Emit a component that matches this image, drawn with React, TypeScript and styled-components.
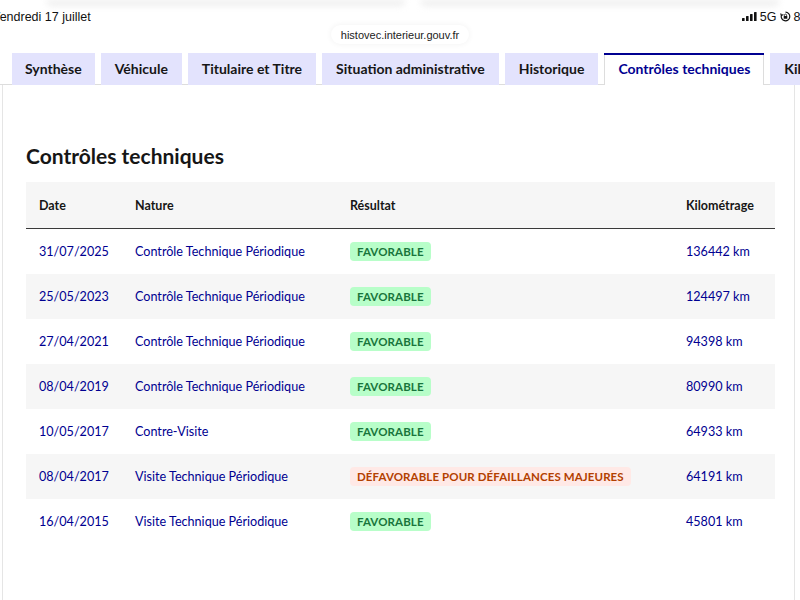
import React from 'react';
import styled, { createGlobalStyle } from 'styled-components';

const GlobalStyle = createGlobalStyle`
  html, body {
    margin: 0;
    padding: 0;
    background: #ffffff;
    overflow: hidden;
  }

  body {
    width: 800px;
    height: 600px;
    font-family: Lato, 'Noto Sans', 'Liberation Sans', sans-serif;
    color: #161616;
  }
`;

const Page = styled.div`
  width: 800px;
  height: 600px;
  overflow: hidden;
  display: flex;
  flex-direction: column;
`;

const Haze = styled.div`
  display: flex;
  gap: 14px;
  height: 8px;
  padding: 0 20px 0 46px;

  span {
    flex: 1;
    height: 6px;
    background: #eeeeee;
    border-radius: 0 0 8px 8px;
    filter: blur(3px);
  }
`;

const StatusBar = styled.div`
  display: flex;
  justify-content: space-between;
  align-items: center;
  height: 17px;
  font-family: 'Liberation Sans', Arial, sans-serif;
  font-size: 12.5px;
  color: #111111;
  white-space: nowrap;
`;

const Clock = styled.span`
  margin-left: -8px;
`;

const Indicators = styled.div`
  display: flex;
  align-items: center;
  gap: 3px;
  margin-right: -22px;
`;

const AddressRow = styled.div`
  display: flex;
  justify-content: center;
  height: 28px;
`;

const AddressPill = styled.div`
  height: 19px;
  padding: 0 10px;
  display: flex;
  align-items: center;
  background: #ffffff;
  border-radius: 10px;
  box-shadow: 0 0 6px rgba(0, 0, 0, 0.06);
  font-family: 'Liberation Sans', Arial, sans-serif;
  font-size: 11px;
  color: #222222;
`;

const TabList = styled.div`
  display: flex;
  gap: 6px;
  padding-left: 12px;
  overflow: hidden;
  box-shadow: inset 0 -1px 0 #dddddd;
`;

const Tab = styled.div<{ $active?: boolean }>`
  flex-shrink: 0;
  height: 32px;
  padding: 0 14px 3px;
  box-sizing: border-box;
  display: flex;
  align-items: center;
  font-size: 14px;
  font-weight: 700;
  white-space: nowrap;
  background: ${({ $active }) => ($active ? '#ffffff' : '#e3e3fd')};
  color: ${({ $active }) => ($active ? '#000091' : '#161616')};
  border-top: 2px solid ${({ $active }) => ($active ? '#000091' : 'transparent')};
  box-shadow: ${({ $active }) =>
    $active ? 'inset 1px 0 0 #dddddd, inset -1px 0 0 #dddddd' : 'none'};

  &:first-child {
    padding-left: 13px;
    padding-right: 13px;
  }
`;

const Panel = styled.div`
  flex: 1;
  margin-left: 2px;
  width: 793px;
  box-sizing: border-box;
  border-left: 1px solid #e5e5e5;
  border-right: 1px solid #e5e5e5;
  padding: 57px 20px 0 23px;
`;

const Title = styled.h2`
  margin: 0 0 12px 0;
  font-size: 21px;
  line-height: 28px;
  font-weight: 700;
  color: #161616;
`;

const Table = styled.div`
  display: grid;
  grid-template-columns: 96px 215px 1fr 102px;
  width: 749px;
`;

const HeadCell = styled.div`
  height: 46px;
  display: flex;
  align-items: center;
  padding-left: 13px;
  background: #f6f6f6;
  border-bottom: 1px solid #3a3a3a;
  font-size: 12.5px;
  font-weight: 700;
  color: #161616;
`;

const Cell = styled.div<{ $shaded: boolean }>`
  height: 45px;
  display: flex;
  align-items: center;
  padding-left: 13px;
  background: ${({ $shaded }) => ($shaded ? '#f6f6f6' : '#ffffff')};
  font-size: 12.6px;
  color: #000091;
  white-space: nowrap;
`;

const Badge = styled.span<{ $ok: boolean }>`
  display: inline-flex;
  align-items: center;
  height: 19px;
  padding: 0 7px;
  border-radius: 4px;
  font-size: 11.5px;
  font-weight: 700;
  letter-spacing: 0.1px;
  text-transform: uppercase;
  background: ${({ $ok }) => ($ok ? '#b8fec9' : '#ffe9e6')};
  color: ${({ $ok }) => ($ok ? '#18753c' : '#b34000')};
`;

const tabs = [
  'Synthèse',
  'Véhicule',
  'Titulaire et Titre',
  'Situation administrative',
  'Historique',
  'Contrôles techniques',
  'Kilométrage',
];

type Controle = {
  date: string;
  nature: string;
  resultat: string;
  ok: boolean;
  km: string;
};

const controles: Controle[] = [
  { date: '31/07/2025', nature: 'Contrôle Technique Périodique', resultat: 'Favorable', ok: true, km: '136442 km' },
  { date: '25/05/2023', nature: 'Contrôle Technique Périodique', resultat: 'Favorable', ok: true, km: '124497 km' },
  { date: '27/04/2021', nature: 'Contrôle Technique Périodique', resultat: 'Favorable', ok: true, km: '94398 km' },
  { date: '08/04/2019', nature: 'Contrôle Technique Périodique', resultat: 'Favorable', ok: true, km: '80990 km' },
  { date: '10/05/2017', nature: 'Contre-Visite', resultat: 'Favorable', ok: true, km: '64933 km' },
  { date: '08/04/2017', nature: 'Visite Technique Périodique', resultat: 'Défavorable pour défaillances majeures', ok: false, km: '64191 km' },
  { date: '16/04/2015', nature: 'Visite Technique Périodique', resultat: 'Favorable', ok: true, km: '45801 km' },
];

const SignalIcon = () => (
  <svg width="15" height="9" viewBox="0 0 15 9">
    <rect x="0" y="6" width="2.6" height="3" rx="0.6" fill="#111" />
    <rect x="4" y="4" width="2.6" height="5" rx="0.6" fill="#111" />
    <rect x="8" y="2" width="2.6" height="7" rx="0.6" fill="#111" />
    <rect x="12" y="0" width="2.6" height="9" rx="0.6" fill="#111" />
  </svg>
);

const LockIcon = () => (
  <svg width="11" height="11" viewBox="0 0 11 11">
    <path d="M5.5 1.2 A4.3 4.3 0 1 1 1.4 4.2" fill="none" stroke="#111" strokeWidth="1.2" />
    <path d="M0.6 2.6 L1.5 4.6 L3.4 3.6" fill="none" stroke="#111" strokeWidth="1.1" />
    <rect x="3.7" y="5" width="3.6" height="2.8" rx="0.4" fill="#111" />
    <path d="M4.4 5 V4.2 A1.1 1.1 0 0 1 6.6 4.2 V5" fill="none" stroke="#111" strokeWidth="0.8" />
  </svg>
);

export default function App() {
  return (
    <>
      <GlobalStyle />
      <Page>
        <Haze>
          <span />
          <span />
        </Haze>
        <StatusBar>
          <Clock>Vendredi 17 juillet</Clock>
          <Indicators>
            <SignalIcon />
            <span>5G</span>
            <LockIcon />
            <span>80 %</span>
          </Indicators>
        </StatusBar>
        <AddressRow>
          <AddressPill>histovec.interieur.gouv.fr</AddressPill>
        </AddressRow>
        <TabList>
          {tabs.map((t) => (
            <Tab key={t} $active={t === 'Contrôles techniques'}>
              {t}
            </Tab>
          ))}
        </TabList>
        <Panel>
          <Title>Contrôles techniques</Title>
          <Table>
            <HeadCell>Date</HeadCell>
            <HeadCell>Nature</HeadCell>
            <HeadCell>Résultat</HeadCell>
            <HeadCell>Kilométrage</HeadCell>
            {controles.map((c, i) => {
              const shaded = i % 2 === 1;
              return (
                <React.Fragment key={c.date}>
                  <Cell $shaded={shaded}>{c.date}</Cell>
                  <Cell $shaded={shaded}>{c.nature}</Cell>
                  <Cell $shaded={shaded}>
                    <Badge $ok={c.ok}>{c.resultat}</Badge>
                  </Cell>
                  <Cell $shaded={shaded}>{c.km}</Cell>
                </React.Fragment>
              );
            })}
          </Table>
        </Panel>
      </Page>
    </>
  );
}
